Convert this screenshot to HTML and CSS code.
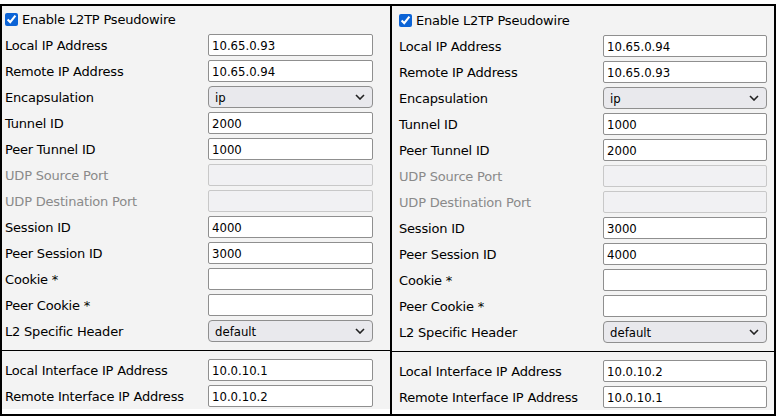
FILE: index.html
```html
<!DOCTYPE html>
<html lang="en">
<head>
  <meta charset="UTF-8" />
  <title>L2TP Pseudowire</title>
  <link rel="stylesheet" href="styles.css">
</head>
<body>

  <div class="panels">

    <!-- Side A -->
    <div class="panel panel-left">
      <div class="panel-body">
        <div class="row check-row">
          <input type="checkbox" checked>
          <span>Enable L2TP Pseudowire</span>
        </div>
        <div class="row"><label>Local IP Address</label><input type="text" value="10.65.0.93"></div>
        <div class="row"><label>Remote IP Address</label><input type="text" value="10.65.0.94"></div>
        <div class="row">
          <label>Encapsulation</label>
          <div class="select-wrap">
            <select><option>ip</option></select>
            <svg class="chevron" width="10" height="6" viewBox="0 0 10 6"><path d="M1 1 L5 5 L9 1" fill="none" stroke="#222" stroke-width="1.6"/></svg>
          </div>
        </div>
        <div class="row"><label>Tunnel ID</label><input type="text" value="2000"></div>
        <div class="row"><label>Peer Tunnel ID</label><input type="text" value="1000"></div>
        <div class="row disabled"><label>UDP Source Port</label><input type="text" disabled></div>
        <div class="row disabled"><label>UDP Destination Port</label><input type="text" disabled></div>
        <div class="row"><label>Session ID</label><input type="text" value="4000"></div>
        <div class="row"><label>Peer Session ID</label><input type="text" value="3000"></div>
        <div class="row"><label>Cookie *</label><input type="text"></div>
        <div class="row"><label>Peer Cookie *</label><input type="text"></div>
        <div class="row">
          <label>L2 Specific Header</label>
          <div class="select-wrap">
            <select><option>default</option></select>
            <svg class="chevron" width="10" height="6" viewBox="0 0 10 6"><path d="M1 1 L5 5 L9 1" fill="none" stroke="#222" stroke-width="1.6"/></svg>
          </div>
        </div>

        <div class="divider"></div>

        <div class="row"><label>Local Interface IP Address</label><input type="text" value="10.0.10.1"></div>
        <div class="row"><label>Remote Interface IP Address</label><input type="text" value="10.0.10.2"></div>
      </div>
    </div>

    <!-- Side B -->
    <div class="panel panel-right">
      <div class="panel-body">
        <div class="row check-row">
          <input type="checkbox" checked>
          <span>Enable L2TP Pseudowire</span>
        </div>
        <div class="row"><label>Local IP Address</label><input type="text" value="10.65.0.94"></div>
        <div class="row"><label>Remote IP Address</label><input type="text" value="10.65.0.93"></div>
        <div class="row">
          <label>Encapsulation</label>
          <div class="select-wrap">
            <select><option>ip</option></select>
            <svg class="chevron" width="10" height="6" viewBox="0 0 10 6"><path d="M1 1 L5 5 L9 1" fill="none" stroke="#222" stroke-width="1.6"/></svg>
          </div>
        </div>
        <div class="row"><label>Tunnel ID</label><input type="text" value="1000"></div>
        <div class="row"><label>Peer Tunnel ID</label><input type="text" value="2000"></div>
        <div class="row disabled"><label>UDP Source Port</label><input type="text" disabled></div>
        <div class="row disabled"><label>UDP Destination Port</label><input type="text" disabled></div>
        <div class="row"><label>Session ID</label><input type="text" value="3000"></div>
        <div class="row"><label>Peer Session ID</label><input type="text" value="4000"></div>
        <div class="row"><label>Cookie *</label><input type="text"></div>
        <div class="row"><label>Peer Cookie *</label><input type="text"></div>
        <div class="row">
          <label>L2 Specific Header</label>
          <div class="select-wrap">
            <select><option>default</option></select>
            <svg class="chevron" width="10" height="6" viewBox="0 0 10 6"><path d="M1 1 L5 5 L9 1" fill="none" stroke="#222" stroke-width="1.6"/></svg>
          </div>
        </div>

        <div class="divider"></div>

        <div class="row"><label>Local Interface IP Address</label><input type="text" value="10.0.10.2"></div>
        <div class="row"><label>Remote Interface IP Address</label><input type="text" value="10.0.10.1"></div>
      </div>
    </div>

  </div>

</body>
</html>
```

FILE: styles.css
```css
* {
  box-sizing: border-box;
  margin: 0;
  padding: 0;
}

html, body {
  background: #ffffff;
  font-family: "DejaVu Sans", Verdana, sans-serif;
  font-size: 13px;
  letter-spacing: -0.2px;
  color: #000;
}

.panels {
  display: flex;
  margin-top: 4px;
}

.panel {
  background: #ffffff;
  border-top: 2px solid #000;
  border-left: 2px solid #000;
  border-bottom: 2px solid #000;
}

.panel-left {
  width: 390px;
  padding-bottom: 5px;
}

.panel-right {
  width: 386px;
  border-right: 2px solid #000;
  padding-bottom: 2px;
}

.panel-body {
  background: #f3f3f3;
}

.panel-left .panel-body {
  padding-left: 3px;
}

.panel-right .panel-body {
  padding-left: 7px;
  padding-top: 1px;
}

.row {
  display: grid;
  grid-template-columns: 203px 165px;
  align-items: center;
  height: 26px;
}

.panel-right .row {
  grid-template-columns: 204px 164px;
}

.row label {
  white-space: nowrap;
}

.check-row {
  display: flex;
  align-items: center;
}

.check-row input {
  width: 13px;
  height: 13px;
  margin: 0 4px 0 0;
  accent-color: #0b63d6;
}

.row input[type="text"],
.row select {
  height: 22px;
  width: 100%;
  border: 1px solid #8f8f8f;
  border-radius: 2px;
  background: #fff;
  font-family: "DejaVu Sans Condensed", "Liberation Sans", sans-serif;
  font-size: 13px;
  letter-spacing: 0;
  color: #000;
  padding: 0 3px;
  outline: none;
}

.disabled label {
  color: #8a8a8a;
}

.row input[disabled] {
  background: #f1f1f3;
  border-color: #c8c8c8;
}

.select-wrap {
  position: relative;
  height: 22px;
}

.row select {
  appearance: none;
  -webkit-appearance: none;
  background: #e9e9ed;
  border-radius: 4px;
  padding-left: 6px;
}

.chevron {
  position: absolute;
  right: 8px;
  top: 8px;
  pointer-events: none;
}

.divider {
  height: 1px;
  background: #000;
  margin: 6px 0 6px -3px;
}

.panel-right .divider {
  margin-left: -7px;
}
```
